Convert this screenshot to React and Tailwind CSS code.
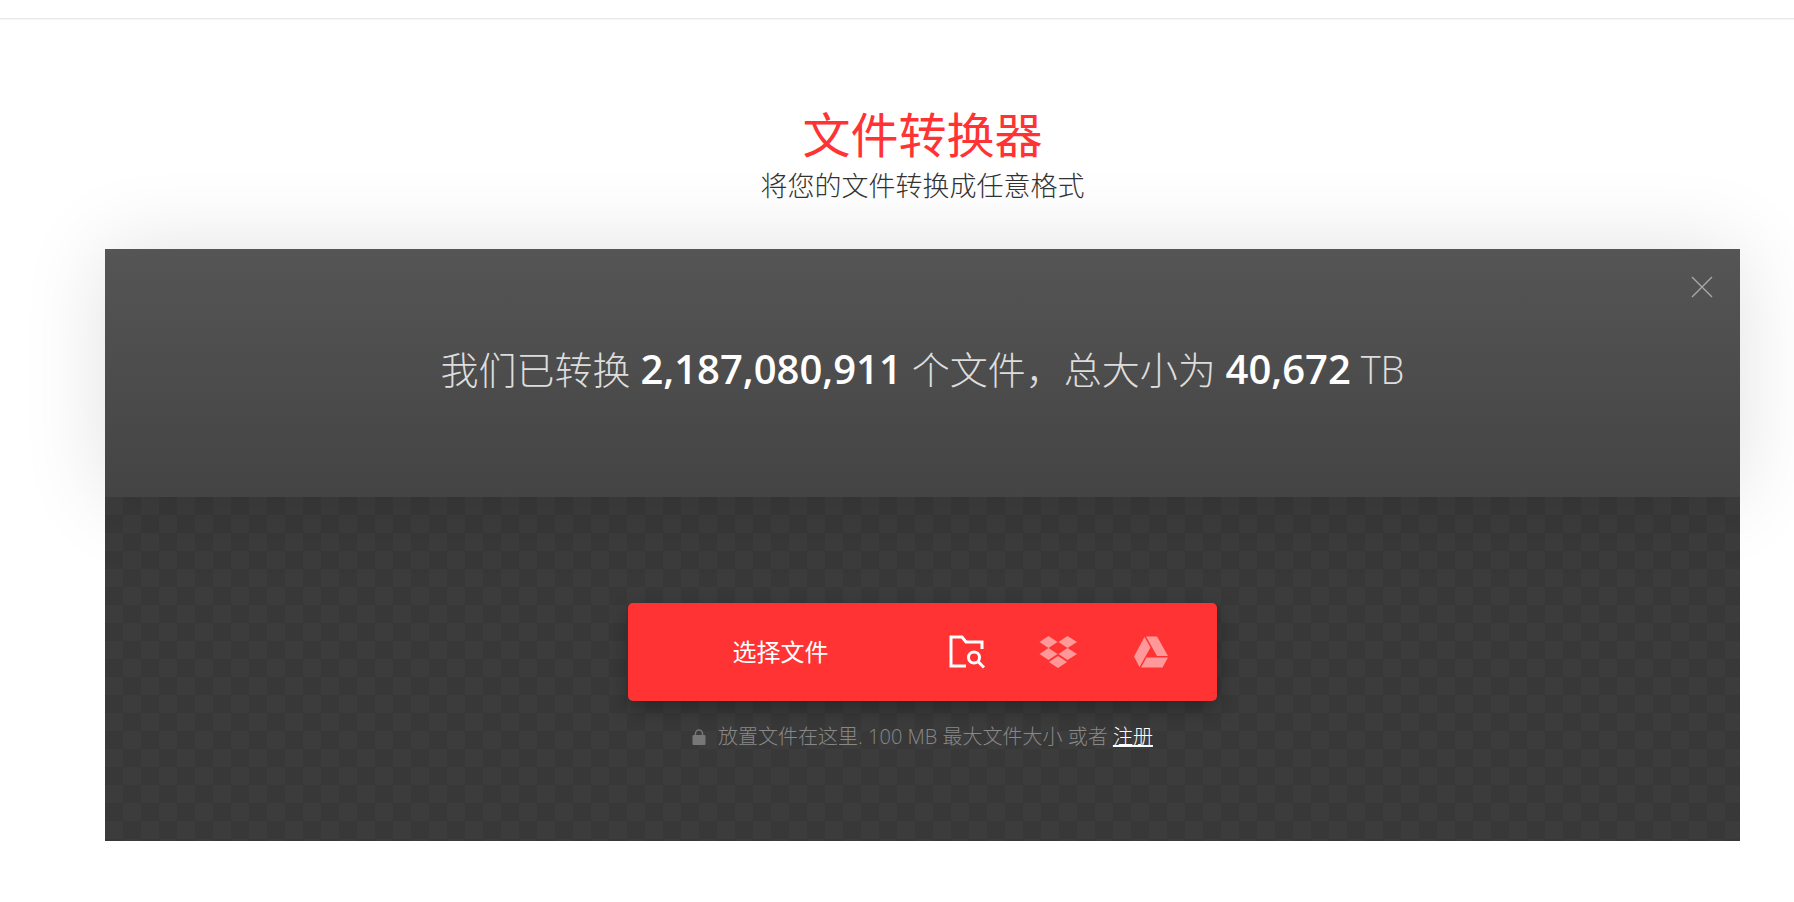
import React, { useState } from 'react';

const CloseIcon = () => (
  <svg width="22" height="22" viewBox="0 0 22 22" fill="none" stroke="currentColor" strokeWidth="1.3" aria-hidden="true">
    <path d="M1 1l20 20M21 1L1 21" />
  </svg>
);

const FolderSearchIcon = () => (
  <svg width="36" height="34" viewBox="0 0 36 34" fill="none" stroke="currentColor" strokeWidth="3" aria-hidden="true">
    <path d="M17 31H2V2h11l4 5H33V14" />
    <circle cx="25" cy="22.500" r="5.500" />
    <path d="M29 26.500l6 6" />
  </svg>
);

const DropboxIcon = () => (
  <svg width="40" height="34" viewBox="0 0 40 34" fill="currentColor" aria-hidden="true">
    <path d="M9.500 1l9 6-9 6-9-6z" />
    <path d="M28.500 1l9.500 6-9.500 6-9-6z" />
    <path d="M9.500 13l9 6-9 6-9-6z" />
    <path d="M28.500 13l9.500 6-9.500 6-9-6z" />
    <path d="M19 21l9 6-9 6-9-6z" />
  </svg>
);

const DriveIcon = () => (
  <svg width="36" height="32" viewBox="0 0 36 32" fill="currentColor" aria-hidden="true">
    <path d="M11.500 1l6 10.500L6.500 31 1 20.500z" />
    <path d="M13 0.500h11L35 20H24z" />
    <path d="M13.500 21.500H35L29.500 31.500H8z" />
  </svg>
);

const LockIcon = () => (
  <svg width="14" height="16" viewBox="0 0 14 16" aria-hidden="true">
    <rect x="0.500" y="6" width="13" height="10" rx="1" fill="currentColor" />
    <path d="M3.500 7V4.500a3.500 3.500 0 0 1 7 0V7" fill="none" stroke="currentColor" strokeWidth="1.500" />
  </svg>
);

const sources = [
  { label: '从计算机', Icon: FolderSearchIcon, className: 'text-white' },
  { label: 'Dropbox', Icon: DropboxIcon, className: 'text-[#ff9999]' },
  { label: 'Google Drive', Icon: DriveIcon, className: 'text-[#ff9999]' },
];

const StatsBanner = ({ onClose }) => (
  <section className="relative z-10 flex h-[248px] items-center justify-center bg-linear-to-b from-[#555555] to-[#444444] shadow-[0_0_80px_rgba(0,0,0,0.12)]">
    <p className="pb-2 text-[38px] leading-[52px] font-light text-[#dddddd]">
      我们已转换 <b className="text-[40px] font-semibold text-white">2,187,080,911</b> 个文件，总大小为{' '}
      <b className="text-[40px] font-semibold text-white">40,672</b> TB
    </p>
    <button
      type="button"
      aria-label="关闭"
      onClick={onClose}
      className="absolute top-4 right-4 flex size-11 cursor-pointer items-center justify-center text-[#aaaaaa] hover:text-white"
    >
      <CloseIcon />
    </button>
  </section>
);

const FilePicker = () => (
  <div className="flex h-[98px] w-[589px] rounded-[5px] bg-[#ff3333] pr-5 shadow-[0_8px_20px_rgba(0,0,0,0.3)]">
    <button type="button" className="flex-1 cursor-pointer pl-3 text-2xl font-normal text-white">
      选择文件
    </button>
    {sources.map(({ label, Icon, className }) => (
      <button
        key={label}
        type="button"
        aria-label={label}
        className={`flex w-[92px] cursor-pointer items-center justify-center hover:text-white ${className}`}
      >
        <Icon />
      </button>
    ))}
  </div>
);

const App = () => {
  const [showStats, setShowStats] = useState(true);

  return (
    <div className="min-h-screen bg-white font-['Open_Sans','Noto_Sans_CJK_SC',sans-serif]" lang="zh-CN">
      <header className="h-[19px] border-b border-[#e8e8e8] shadow-[0_1px_0_#f6f6f6]" />

      <main className="pt-[84px] pr-[54px] pb-[61px] pl-[105px]">
        <div className="mb-[45px] text-center">
          <h1 className="text-5xl leading-[64px] font-normal text-[#ff3333]">文件转换器</h1>
          <h2 className="pt-px text-[27px] leading-9 font-light text-[#333333]">将您的文件转换成任意格式</h2>
        </div>

        {showStats && <StatsBanner onClose={() => setShowStats(false)} />}

        <section className="flex h-[344px] flex-col items-center bg-[#383838] bg-[conic-gradient(#383838_25%,#3c3c3c_0_50%,#383838_0_75%,#3c3c3c_0)] bg-[size:36px_36px] pt-[106px]">
          <FilePicker />
          <p className="mt-5 flex items-center text-xl leading-8 font-light text-[#888888]">
            <span className="mr-3 text-[#777777]">
              <LockIcon />
            </span>
            <span>
              放置文件在这里. 100 MB 最大文件大小 或者{' '}
              <a href="#signup" className="text-white underline">注册</a>
            </span>
          </p>
        </section>
      </main>
    </div>
  );
};

export default App;
